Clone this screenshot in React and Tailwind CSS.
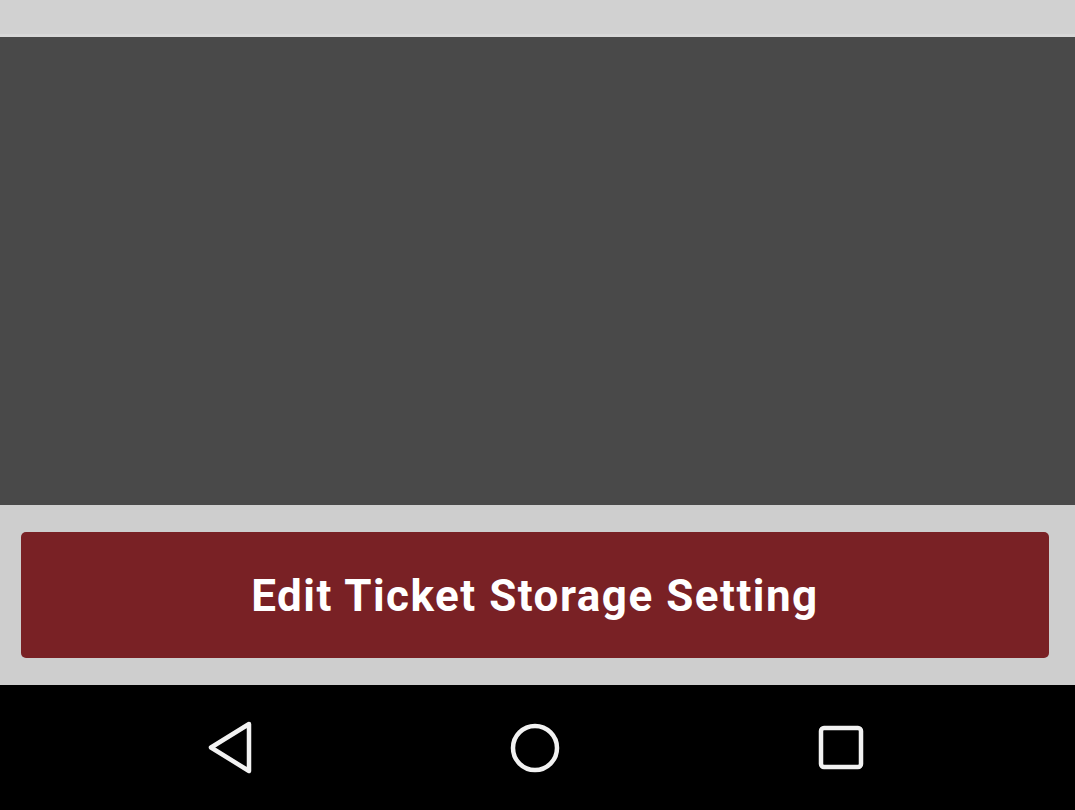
import React from 'react';

const BackIcon = () => (
  <svg width="48" height="56" viewBox="0 0 48 56" className="block">
    <path
      d="M43 4 L5 27.5 L43 51 Z"
      fill="none"
      stroke="#f2f2f2"
      strokeWidth="4.5"
      strokeLinejoin="round"
    />
  </svg>
);

const HomeIcon = () => (
  <svg width="52" height="52" viewBox="0 0 52 52" className="block">
    <circle cx="26" cy="26" r="22" fill="none" stroke="#f2f2f2" strokeWidth="4.5" />
  </svg>
);

const RecentsIcon = () => (
  <svg width="48" height="48" viewBox="0 0 48 48" className="block">
    <rect x="4" y="4" width="40" height="39" rx="3" fill="none" stroke="#f2f2f2" strokeWidth="4.5" />
  </svg>
);

export default function App() {
  return (
    <div className="w-[1075px] h-[810px] flex flex-col overflow-hidden font-['Roboto',_'Liberation_Sans',_sans-serif]">
      {/* top strip, content scrolled off */}
      <div className="h-[37px] bg-[#d1d1d1] border-b-[3px] border-[#d8d8d8]" />

      {/* empty dark panel */}
      <div className="h-[468px] bg-[#494949]" />

      <div className="h-[180px] bg-[#cecece] pt-[27px] pb-[27px] pl-[21px] pr-[26px]">
        <button className="w-full h-[126px] rounded-[5px] bg-[#792125] text-white font-bold text-[44px] leading-none tracking-[1.5px] pt-[1px]">
          Edit Ticket Storage Setting
        </button>
      </div>

      {/* android nav bar */}
      <div className="flex-1 bg-black flex items-center">
        <div className="w-[535px] flex justify-end pr-[281px]">
          <BackIcon />
        </div>
        <div className="ml-[-26px]">
          <HomeIcon />
        </div>
        <div className="ml-[256px]">
          <RecentsIcon />
        </div>
      </div>
    </div>
  );
}
